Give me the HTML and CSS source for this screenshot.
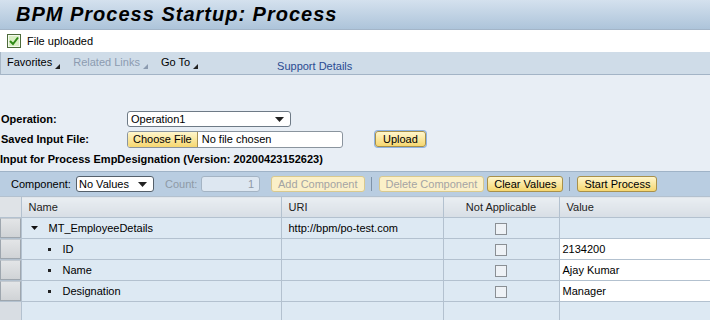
FILE: index.html
```html
<!DOCTYPE html>
<html lang="en">
<head>
    <meta charset="UTF-8">
    <title>BPM Process Startup: Process</title>
    <link rel="stylesheet" href="styles.css">
</head>
<body>
    <div class="title-bar">
        <h1>BPM Process Startup: Process</h1>
    </div>

    <div class="message-bar">
        <svg class="msg-icon" width="14" height="14" viewBox="0 0 14 14">
            <rect x="0.5" y="0.5" width="13" height="13" fill="#d9eec4" stroke="#4d6b3a"/>
            <rect x="1.5" y="1.5" width="11" height="11" fill="none" stroke="#f4faee"/>
            <path d="M3 7 L6 10 L11 3.5" fill="none" stroke="#2e8a16" stroke-width="2"/>
        </svg>
        <span>File uploaded</span>
    </div>

    <div class="menu-bar">
        <span class="menu-item">Favorites<svg class="corner" width="5" height="5" viewBox="0 0 5 5"><polygon points="5,0 5,5 0,5"/></svg></span>
        <span class="menu-item disabled">Related Links<svg class="corner" width="5" height="5" viewBox="0 0 5 5"><polygon points="5,0 5,5 0,5"/></svg></span>
        <span class="menu-item">Go To<svg class="corner" width="5" height="5" viewBox="0 0 5 5"><polygon points="5,0 5,5 0,5"/></svg></span>
        <a href="#" class="support-link">Support Details</a>
    </div>

    <div class="content">
        <div class="form-grid">
            <label>Operation:</label>
            <div class="select op-select">
                <span>Operation1</span>
                <svg width="9" height="5" viewBox="0 0 9 5"><polygon points="0,0 9,0 4.5,5"/></svg>
            </div>
            <span></span>

            <label>Saved Input File:</label>
            <div class="file-input">
                <span class="btn file-btn">Choose File</span>
                <span class="file-name">No file chosen</span>
            </div>
            <span class="btn upload-btn">Upload</span>

            <div class="process-info">Input for Process EmpDesignation (Version: 20200423152623)</div>
        </div>

        <div class="toolbar">
            <span class="tb-label">Component:</span>
            <div class="select comp-select">
                <span>No Values</span>
                <svg width="9" height="5" viewBox="0 0 9 5"><polygon points="0,0 9,0 4.5,5"/></svg>
            </div>
            <span class="tb-label muted">Count:</span>
            <span class="count-input">1</span>
            <span class="btn disabled add-btn">Add Component</span>
            <span class="tb-sep"></span>
            <span class="btn disabled">Delete Component</span>
            <span class="btn clear-btn">Clear Values</span>
            <span class="tb-sep"></span>
            <span class="btn">Start Process</span>
        </div>

        <table class="data-grid">
            <colgroup>
                <col class="c-sel">
                <col class="c-name">
                <col class="c-uri">
                <col class="c-na">
                <col class="c-val">
            </colgroup>
            <thead>
                <tr>
                    <th class="sel"></th>
                    <th>Name</th>
                    <th>URI</th>
                    <th class="center">Not Applicable</th>
                    <th>Value</th>
                </tr>
            </thead>
            <tbody>
                <tr>
                    <td class="sel"><span class="sel-btn"></span></td>
                    <td class="tree-node"><svg class="expander" width="7" height="4" viewBox="0 0 7 4"><polygon points="0,0 7,0 3.5,4"/></svg>MT_EmployeeDetails</td>
                    <td>http://bpm/po-test.com</td>
                    <td class="center"><span class="check"></span></td>
                    <td></td>
                </tr>
                <tr>
                    <td class="sel"><span class="sel-btn"></span></td>
                    <td class="tree-leaf"><span class="bullet"></span>ID</td>
                    <td></td>
                    <td class="center"><span class="check"></span></td>
                    <td class="value">2134200</td>
                </tr>
                <tr>
                    <td class="sel"><span class="sel-btn"></span></td>
                    <td class="tree-leaf"><span class="bullet"></span>Name</td>
                    <td></td>
                    <td class="center"><span class="check"></span></td>
                    <td class="value">Ajay Kumar</td>
                </tr>
                <tr>
                    <td class="sel"><span class="sel-btn"></span></td>
                    <td class="tree-leaf"><span class="bullet"></span>Designation</td>
                    <td></td>
                    <td class="center"><span class="check"></span></td>
                    <td class="value">Manager</td>
                </tr>
                <tr class="empty">
                    <td class="sel"></td>
                    <td></td>
                    <td></td>
                    <td></td>
                    <td></td>
                </tr>
            </tbody>
        </table>
    </div>
</body>
</html>
```

FILE: styles.css
```css
body {
    margin: 0;
    font-family: "Liberation Sans", Arial, sans-serif;
    font-size: 11px;
    color: #000;
    background: #e8eef5;
    overflow: hidden;
}

/* page header */
.title-bar {
    height: 29px;
    background: linear-gradient(#d4e1ee, #adc4da);
    border-bottom: 1px solid #a3b5c8;
    display: flex;
    align-items: center;
}
.title-bar h1 {
    margin: 0 0 0 16px;
    font-size: 20px;
    font-style: italic;
    font-weight: bold;
    letter-spacing: 1px;
    color: #000;
}

.message-bar {
    height: 22px;
    background: #fff;
    display: flex;
    align-items: center;
    padding-left: 7px;
}
.msg-icon {
    margin-right: 6px;
}

.menu-bar {
    height: 22px;
    background: #cfdce8;
    border-bottom: 1px solid #a3b4c6;
    border-left: 1px solid #a9b8c7;
    display: flex;
    align-items: center;
    padding-left: 6px;
}
.menu-item {
    display: flex;
    align-items: center;
    margin-right: 13px;
    position: relative;
    top: -1px;
}
.menu-item .corner {
    margin-left: 3px;
    margin-top: 8px;
    fill: #222;
}
.menu-item.disabled {
    color: #8c9bb0;
}
.menu-item.disabled .corner {
    fill: #8c9bb0;
}
.support-link {
    margin-left: 66px;
    color: #2a4b92;
    text-decoration: none;
    position: relative;
    top: 3px;
}

/* form */
.content {
    padding-top: 34px;
}
.form-grid {
    display: grid;
    grid-template-columns: 127px 248px auto;
    grid-auto-rows: 20px;
    align-items: center;
    height: 62px;
}
.form-grid label {
    font-weight: bold;
    padding-left: 1px;
}
.process-info {
    grid-column: 1 / 4;
    font-weight: bold;
}

.select {
    box-sizing: border-box;
    height: 16px;
    background: #fff;
    border: 1px solid #6e7a86;
    border-radius: 3px;
    display: flex;
    align-items: center;
    justify-content: space-between;
    padding: 0 6px 0 3px;
}
.select svg {
    fill: #222;
}
.op-select {
    width: 164px;
}

.file-input {
    box-sizing: border-box;
    width: 216px;
    height: 17px;
    background: #fff;
    border: 1px solid #8a949e;
    border-radius: 3px;
    display: flex;
    align-items: center;
    overflow: hidden;
}
.file-input .file-btn {
    height: 15px;
    border: none;
    border-right: 1px solid #a58f52;
    border-radius: 0;
    margin: 0;
    padding: 0 5px;
}
.file-name {
    padding-left: 4px;
}

.btn {
    box-sizing: border-box;
    display: inline-flex;
    align-items: center;
    height: 16px;
    padding: 0 6px;
    border: 1px solid #a8904a;
    border-radius: 3px;
    background: linear-gradient(#fff6cc, #f6d770);
    color: #000;
    white-space: nowrap;
}
.btn.disabled {
    background: #fbf0c8;
    border-color: #d9c98e;
    color: #a4a4a4;
}
.upload-btn {
    justify-self: start;
    box-shadow: 0 0 0 1px #8db2e3;
    padding: 0 7px;
}

/* toolbar above the grid */
.toolbar {
    box-sizing: border-box;
    height: 25px;
    background: #b9cde1;
    border-top: 1px solid #9fb3c7;
    display: flex;
    align-items: center;
    padding-left: 11px;
}
.tb-label {
    width: 65px;
}
.tb-label.muted {
    width: 36px;
    color: #8e9aa6;
}
.comp-select {
    width: 78px;
    margin-right: 11px;
    border-color: #55606b;
    padding-left: 2px;
}
.count-input {
    box-sizing: border-box;
    width: 59px;
    height: 16px;
    border: 1px solid #a4b4c4;
    border-radius: 3px;
    background: #dde7f1;
    color: #8e9aa6;
    text-align: right;
    padding-right: 5px;
    line-height: 14px;
    margin-right: 11px;
}
.tb-sep {
    width: 1px;
    height: 14px;
    background: #7f93a8;
    margin: 0 7px 0 6px;
}
.clear-btn {
    margin-left: 3px;
}

/* data grid */
.data-grid {
    border-collapse: collapse;
    table-layout: fixed;
    width: 710px;
    background: #dde9f3;
}
.c-sel { width: 21px; }
.c-name { width: 260px; }
.c-uri { width: 162px; }
.c-na { width: 116px; }
.c-val { width: 151px; }

.data-grid th,
.data-grid td {
    height: 20px;
    padding: 0 0 0 7px;
    border: 1px solid #b3c1cf;
    text-align: left;
    font-weight: normal;
    white-space: nowrap;
    overflow: hidden;
}
.data-grid th {
    background: linear-gradient(#eaeef2, #d7dee5);
    color: #222;
}
.data-grid th:first-child,
.data-grid td:first-child {
    border-left: none;
}
.data-grid .center {
    text-align: center;
    padding-left: 0;
}
.data-grid .sel {
    padding: 0;
    background: #d6dadf;
}
.data-grid th.sel {
    background: #dfe3e7;
}
.sel-btn {
    display: block;
    box-sizing: border-box;
    height: 20px;
    border: 1px solid #9ea6ae;
    border-top-color: #c4cad0;
    background: linear-gradient(#e3e5e7, #d0d3d6);
}
.empty .sel {
    background: #d8dde3;
}

.tree-node {
    padding-left: 9px !important;
}
.expander {
    fill: #111;
    margin-right: 11px;
    vertical-align: middle;
    position: relative;
    top: -1px;
}
.tree-leaf {
    padding-left: 26px !important;
}
.bullet {
    display: inline-block;
    width: 3px;
    height: 3px;
    background: #222;
    margin-right: 12px;
    vertical-align: middle;
    position: relative;
    top: -1px;
}
.check {
    display: inline-block;
    box-sizing: border-box;
    width: 12px;
    height: 12px;
    border: 1px solid #8a8f94;
    background: #eef2f6;
    vertical-align: middle;
}
.data-grid td.value {
    background: #fff;
    padding-left: 3px;
}
```
